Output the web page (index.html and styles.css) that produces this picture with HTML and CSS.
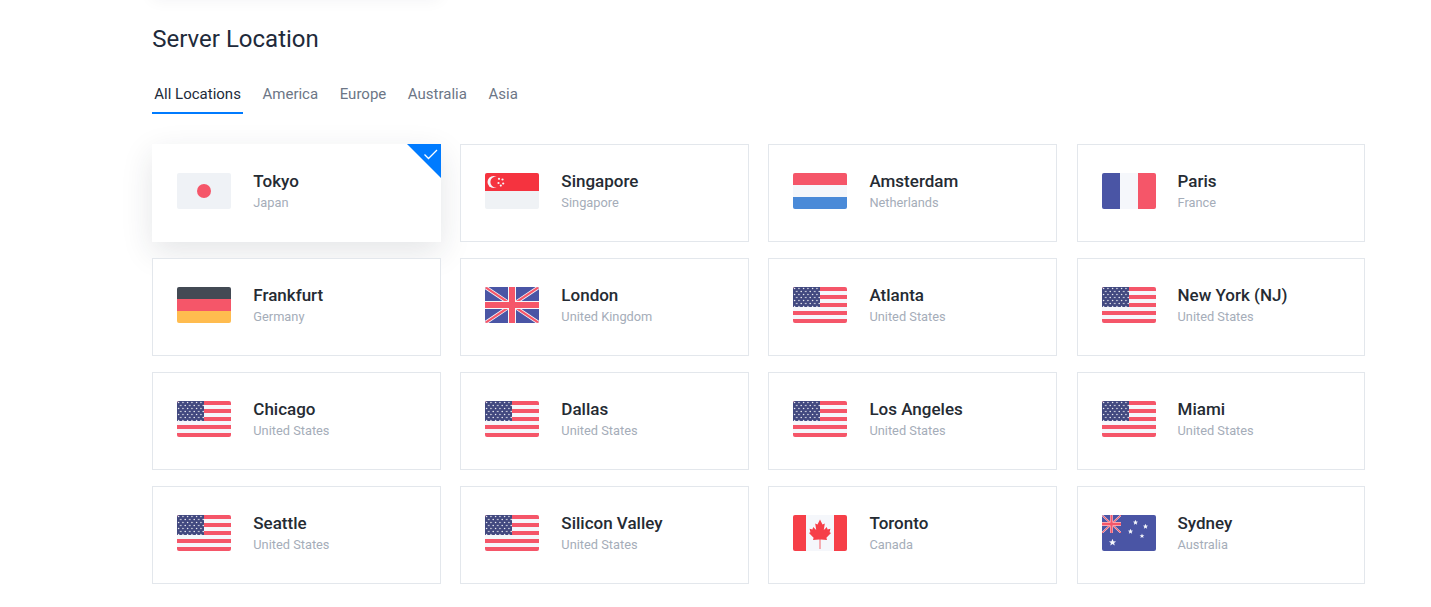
FILE: index.html
```html
<!DOCTYPE html>
<html lang="en">
  <head>
    <meta charset="UTF-8" />
    <title>Server Location</title>
    <link rel="stylesheet" href="styles.css">
  </head>
  <body>
    <!-- shared flag drawings -->
    <svg class="sprite" width="0" height="0">
      <defs>
        <pattern id="usStars" width="4.5" height="6" patternUnits="userSpaceOnUse">
          <circle cx="1.5" cy="1.5" r="0.7" fill="#fff" />
          <circle cx="3.75" cy="4.5" r="0.7" fill="#fff" />
        </pattern>
        <polygon id="star" points="0,-5 1.3,-1.7 4.8,-1.5 2.1,0.6 3,4 0,2.1 -3,4 -2.1,0.6 -4.8,-1.5 -1.3,-1.7" fill="#f5f7fb" />
        <symbol id="flag-us" viewBox="0 0 54 36">
          <rect width="54" height="36" fill="#f5f7fb" />
          <rect width="54" height="4" fill="#f55669" />
          <rect y="8" width="54" height="4" fill="#f55669" />
          <rect y="16" width="54" height="4" fill="#f55669" />
          <rect y="24" width="54" height="4" fill="#f55669" />
          <rect y="32" width="54" height="4" fill="#f55669" />
          <rect width="27" height="20" fill="#41487f" />
          <rect width="27" height="20" fill="url(#usStars)" />
        </symbol>
        <symbol id="union" viewBox="0 0 54 36">
          <rect width="54" height="36" fill="#4a55a5" />
          <path d="M0 0L54 36M54 0L0 36" stroke="#f5f7fb" stroke-width="3.8" />
          <path d="M0 0L54 36M54 0L0 36" stroke="#f55669" stroke-width="2.2" />
          <path d="M27 0V36M0 18H54" stroke="#f5f7fb" stroke-width="8" />
          <path d="M27 0V36M0 18H54" stroke="#f55669" stroke-width="6" />
        </symbol>
      </defs>
    </svg>

    <div class="page">
      <div class="prev-card"></div>

      <h2 class="section-title">Server Location</h2>

      <ul class="tabs">
        <li class="tab active">All Locations</li>
        <li class="tab">America</li>
        <li class="tab">Europe</li>
        <li class="tab">Australia</li>
        <li class="tab">Asia</li>
      </ul>

      <div class="location-grid">
        <div class="location selected">
          <svg class="flag" viewBox="0 0 54 36">
            <rect width="54" height="36" fill="#eff2f6" />
            <circle cx="27" cy="18" r="7" fill="#f55669" />
          </svg>
          <div class="location-text">
            <h4>Tokyo</h4>
            <span>Japan</span>
          </div>
          <svg class="check-badge" viewBox="0 0 34 34">
            <path d="M0 0H34V34z" fill="#007bff" />
            <path d="M17.5 10.5L21.5 14.5L30 6" fill="none" stroke="#fff" stroke-width="1.3" />
          </svg>
        </div>

        <div class="location">
          <svg class="flag" viewBox="0 0 54 36">
            <rect width="54" height="36" fill="#eff2f5" />
            <rect width="54" height="18" fill="#f5333f" />
            <circle cx="8.5" cy="9" r="6" fill="#f5f7fb" />
            <circle cx="11" cy="9" r="5.6" fill="#f5333f" />
            <g fill="#f5f7fb">
              <circle cx="14" cy="5.8" r="1.1" />
              <circle cx="17.5" cy="6.5" r="1.1" />
              <circle cx="18.2" cy="10.5" r="1.1" />
              <circle cx="13.5" cy="10" r="1.1" />
              <circle cx="15.8" cy="12.6" r="1.1" />
            </g>
          </svg>
          <div class="location-text">
            <h4>Singapore</h4>
            <span>Singapore</span>
          </div>
        </div>

        <div class="location">
          <svg class="flag" viewBox="0 0 54 36">
            <rect width="54" height="36" fill="#f5f7fb" />
            <rect width="54" height="12" fill="#f55669" />
            <rect y="24" width="54" height="12" fill="#4a8ad8" />
          </svg>
          <div class="location-text">
            <h4>Amsterdam</h4>
            <span>Netherlands</span>
          </div>
        </div>

        <div class="location">
          <svg class="flag" viewBox="0 0 54 36">
            <rect width="54" height="36" fill="#f5f7fb" />
            <rect width="18" height="36" fill="#4a55a5" />
            <rect x="36" width="18" height="36" fill="#f55669" />
          </svg>
          <div class="location-text">
            <h4>Paris</h4>
            <span>France</span>
          </div>
        </div>

        <div class="location">
          <svg class="flag" viewBox="0 0 54 36">
            <rect width="54" height="12" fill="#434a54" />
            <rect y="12" width="54" height="12" fill="#f55669" />
            <rect y="24" width="54" height="12" fill="#ffbc4f" />
          </svg>
          <div class="location-text">
            <h4>Frankfurt</h4>
            <span>Germany</span>
          </div>
        </div>

        <div class="location">
          <svg class="flag"><use href="#union" /></svg>
          <div class="location-text">
            <h4>London</h4>
            <span>United Kingdom</span>
          </div>
        </div>

        <div class="location">
          <svg class="flag"><use href="#flag-us" /></svg>
          <div class="location-text">
            <h4>Atlanta</h4>
            <span>United States</span>
          </div>
        </div>

        <div class="location">
          <svg class="flag"><use href="#flag-us" /></svg>
          <div class="location-text">
            <h4>New York (NJ)</h4>
            <span>United States</span>
          </div>
        </div>

        <div class="location">
          <svg class="flag"><use href="#flag-us" /></svg>
          <div class="location-text">
            <h4>Chicago</h4>
            <span>United States</span>
          </div>
        </div>

        <div class="location">
          <svg class="flag"><use href="#flag-us" /></svg>
          <div class="location-text">
            <h4>Dallas</h4>
            <span>United States</span>
          </div>
        </div>

        <div class="location">
          <svg class="flag"><use href="#flag-us" /></svg>
          <div class="location-text">
            <h4>Los Angeles</h4>
            <span>United States</span>
          </div>
        </div>

        <div class="location">
          <svg class="flag"><use href="#flag-us" /></svg>
          <div class="location-text">
            <h4>Miami</h4>
            <span>United States</span>
          </div>
        </div>

        <div class="location">
          <svg class="flag"><use href="#flag-us" /></svg>
          <div class="location-text">
            <h4>Seattle</h4>
            <span>United States</span>
          </div>
        </div>

        <div class="location">
          <svg class="flag"><use href="#flag-us" /></svg>
          <div class="location-text">
            <h4>Silicon Valley</h4>
            <span>United States</span>
          </div>
        </div>

        <div class="location">
          <svg class="flag" viewBox="0 0 54 36">
            <rect width="54" height="36" fill="#f5f7fb" />
            <rect width="13" height="36" fill="#f63f48" />
            <rect x="41" width="13" height="36" fill="#f63f48" />
            <rect x="26.6" y="24" width="0.8" height="10" fill="#f63f48" />
            <path d="M27 4.5L29.5 9.5L31.8 8.4L30.8 15L33.8 12L34.6 14.4L37.4 13.8L36.6 17.2L38 18L33.4 22.8L34 25L28 24.4H26L20 25L20.6 22.8L16 18L17.4 17.2L16.6 13.8L19.4 14.4L20.2 12L23.2 15L22.2 8.4L24.5 9.5z" fill="#f63f48" />
          </svg>
          <div class="location-text">
            <h4>Toronto</h4>
            <span>Canada</span>
          </div>
        </div>

        <div class="location">
          <svg class="flag" viewBox="0 0 54 36">
            <rect width="54" height="36" fill="#4a55a5" />
            <svg width="19" height="18" viewBox="0 0 54 36" preserveAspectRatio="none"><use href="#union" width="54" height="36" /></svg>
            <use href="#star" transform="translate(33.5 7.5) scale(.55)" />
            <use href="#star" transform="translate(43.5 11.5) scale(.55)" />
            <use href="#star" transform="translate(28.5 16.5) scale(.55)" />
            <use href="#star" transform="translate(40 21) scale(.5)" />
            <use href="#star" transform="translate(10.5 27.5) scale(.75)" />
          </svg>
          <div class="location-text">
            <h4>Sydney</h4>
            <span>Australia</span>
          </div>
        </div>
      </div>
    </div>
  </body>
</html>
```

FILE: styles.css
```css
body {
  margin: 0;
  font-family: "Roboto", "Liberation Sans", sans-serif;
  background-color: #fff;
  color: #212a3a;
  overflow: hidden;
}

.sprite {
  position: absolute;
}

.page {
  width: 1213px;
  margin-left: 152.3px;
}

/* bottom edge of the card from the section above */
.prev-card {
  width: 288px;
  height: 20px;
  margin-top: -20px;
  box-shadow: 0 0 16px rgba(33, 42, 58, 0.05);
}

.section-title {
  margin: 24px 0 0;
  font-size: 24px;
  font-weight: 400;
  line-height: 30px;
}

/* tabs */
.tabs {
  display: flex;
  gap: 17.6px;
  margin: 23px 0 0;
  padding: 0;
  list-style: none;
}

.tab {
  padding: 0 2px;
  font-size: 15px;
  line-height: 34px;
  height: 35px;
  border-bottom: 2px solid transparent;
  color: #6c7686;
}

.tab.active {
  color: #212a3a;
  border-bottom-color: #007bff;
}

/* locations */
.location-grid {
  display: grid;
  grid-template-columns: repeat(4, 1fr);
  gap: 16px 19.3px;
  margin-top: 30px;
}

.location {
  position: relative;
  display: flex;
  align-items: center;
  gap: 22px;
  height: 98px;
  box-sizing: border-box;
  padding: 0 24px;
  border: 1px solid #e3e7ec;
  background-color: #fff;
}

.location.selected {
  border-color: #fff;
  box-shadow: 0 10px 30px rgba(33, 42, 58, 0.12);
}

.flag {
  flex: none;
  width: 54px;
  height: 36px;
  margin-top: -4px;
  border-radius: 2px;
}

.location-text {
  margin-top: -5px;
}

.location-text h4 {
  margin: 0 0 1px;
  font-size: 17px;
  font-weight: 500;
  line-height: 24px;
  color: #252b33;
}

.location-text span {
  display: block;
  font-size: 12.8px;
  line-height: 18px;
  color: #a5adb9;
}

.check-badge {
  position: absolute;
  top: -1px;
  right: -1px;
  width: 34px;
  height: 34px;
}
```
